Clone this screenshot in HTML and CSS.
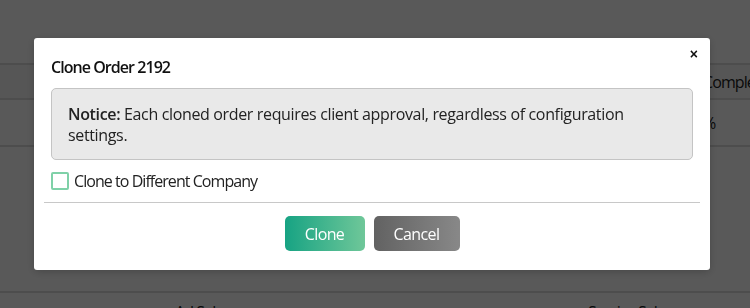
FILE: index.html
```html
<!DOCTYPE html>
<html lang="en">
<head>
  <meta charset="UTF-8">
  <title>Clone Order</title>
  <link rel="stylesheet" href="styles.css">
</head>
<body>
  <div class="page">
    <table class="orders">
      <thead>
        <tr>
          <th class="col-a"></th>
          <th class="col-b"></th>
          <th class="col-c">Complete</th>
        </tr>
      </thead>
      <tbody>
        <tr class="row-tall">
          <td></td>
          <td></td>
          <td>%</td>
        </tr>
        <tr class="row-gap">
          <td></td>
          <td></td>
          <td></td>
        </tr>
        <tr>
          <td class="sub sub-a">Ad Sales</td>
          <td class="sub sub-b">Service Sales</td>
          <td></td>
        </tr>
      </tbody>
    </table>
  </div>

  <div class="overlay">
    <div class="modal">
      <button type="button" class="close-btn">&times;</button>
      <h2 class="modal-title">Clone Order 2192</h2>
      <div class="notice">
        <b>Notice:</b> Each cloned order requires client approval, regardless of configuration settings.
      </div>
      <label class="check-row">
        <span class="check-box"></span>
        Clone to Different Company
      </label>
      <hr class="divider">
      <div class="actions">
        <button type="button" class="btn btn-clone">Clone</button>
        <button type="button" class="btn btn-cancel">Cancel</button>
      </div>
    </div>
  </div>
</body>
</html>
```

FILE: styles.css
```css
body {
  margin: 0;
  font-family: "Open Sans", Arial, sans-serif;
  background-color: #ffffff;
  color: #222;
  overflow: hidden;
}
.page {
  padding-top: 63px;
}
.orders {
  width: 100%;
  border-collapse: collapse;
  font-size: 16px;
  letter-spacing: -0.9px;
  table-layout: fixed;
}
.orders th, .orders td {
  border-top: 2px solid #dcdcdc;
  padding: 0 8px;
  font-weight: normal;
  text-align: left;
  white-space: nowrap;
  overflow: hidden;
}
.orders th {
  background-color: #f7f7f7;
  height: 33px;
}
.col-a {
  width: 424px;
}
.col-b {
  width: 239px;
}
.row-tall td {
  height: 45px;
}
.row-gap td {
  height: 144px;
}
.sub {
  height: 30px;
  vertical-align: bottom;
}
.orders .sub-a {
  padding-left: 175px;
}
.orders .sub-b {
  padding-left: 148px;
}
.overlay {
  position: fixed;
  inset: 0;
  background-color: rgba(0, 0, 0, 0.65);
}
.modal {
  position: relative;
  box-sizing: border-box;
  width: 676px;
  margin: 38px 0 0 34px;
  background: white;
  border-radius: 3px;
  padding: 18px 10px 19px 10px;
  box-shadow: 0 2px 8px rgba(0,0,0,0.2);
}
.close-btn {
  position: absolute;
  top: 8px;
  right: 12px;
  border: none;
  background: none;
  font-size: 14px;
  font-weight: bold;
  color: #111;
  padding: 0;
  cursor: pointer;
  font-family: Arial, sans-serif;
}
.modal-title {
  margin: 0 0 10px 7px;
  font-size: 16px;
  font-weight: 600;
  letter-spacing: -0.95px;
  line-height: 22px;
  color: #111;
}
.notice {
  margin: 0 7px;
  background-color: #e9e9e9;
  border: 1px solid #c4c4c4;
  border-radius: 5px;
  padding: 15px 16px 13px 16px;
  font-size: 16px;
  letter-spacing: -0.35px;
  line-height: 21px;
  color: #222;
}
.notice b {
  font-weight: 600;
}
.check-row {
  display: flex;
  align-items: center;
  gap: 5px;
  margin: 11px 0 0 7px;
  font-size: 16px;
  letter-spacing: -0.95px;
  line-height: 20px;
  color: #222;
}
.check-box {
  box-sizing: border-box;
  width: 18px;
  height: 18px;
  border: 2px solid #7fd1a8;
  border-radius: 2px;
}
.divider {
  border: none;
  border-top: 1px solid #c8c8c8;
  margin: 11px 0 13px 0;
}
.actions {
  display: flex;
  justify-content: center;
  gap: 9px;
}
.btn {
  font-family: "Open Sans", Arial, sans-serif;
  font-size: 16px;
  letter-spacing: -0.6px;
  color: white;
  border: none;
  border-radius: 5px;
  height: 35px;
  padding: 0;
  cursor: pointer;
}
.btn-clone {
  width: 80px;
  background: linear-gradient(to right, #17a383, #6fc799);
}
.btn-cancel {
  width: 86px;
  background: linear-gradient(to right, #626262, #888888);
}
```
